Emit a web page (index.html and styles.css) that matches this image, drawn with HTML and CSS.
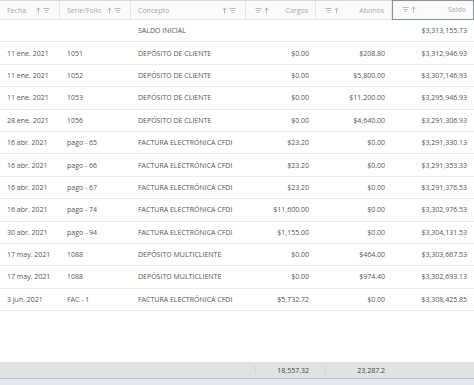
FILE: index.html
```html
<!DOCTYPE html>
<html lang="es">
<head>
<meta charset="utf-8">
<link rel="stylesheet" href="styles.css">
</head>
<body>
<div class="grid-wrap">
  <div class="row head">
    <div class="hc left"><span class="ht">Fecha</span><span class="icons"><svg class="ic" viewBox="0 0 7 7"><path d="M3.5 6.5V1M1.3 3.2L3.5 1l2.2 2.2" fill="none" stroke="#aaa" stroke-width="0.8"/></svg><svg class="ic" viewBox="0 0 7 7"><path d="M0.5 1.5h6M1.5 3.5h4M2.5 5.5h2" stroke="#aaa" stroke-width="0.8"/></svg></span></div>
    <div class="hc left"><span class="ht">Serie/Folio</span><span class="icons"><svg class="ic" viewBox="0 0 7 7"><path d="M3.5 6.5V1M1.3 3.2L3.5 1l2.2 2.2" fill="none" stroke="#aaa" stroke-width="0.8"/></svg><svg class="ic" viewBox="0 0 7 7"><path d="M0.5 1.5h6M1.5 3.5h4M2.5 5.5h2" stroke="#aaa" stroke-width="0.8"/></svg></span></div>
    <div class="hc left"><span class="ht">Concepto</span><span class="icons"><svg class="ic" viewBox="0 0 7 7"><path d="M3.5 6.5V1M1.3 3.2L3.5 1l2.2 2.2" fill="none" stroke="#aaa" stroke-width="0.8"/></svg><svg class="ic" viewBox="0 0 7 7"><path d="M0.5 1.5h6M1.5 3.5h4M2.5 5.5h2" stroke="#aaa" stroke-width="0.8"/></svg></span></div>
    <div class="hc right"><span class="icons"><svg class="ic" viewBox="0 0 7 7"><path d="M0.5 1.5h6M1.5 3.5h4M2.5 5.5h2" stroke="#aaa" stroke-width="0.8"/></svg><svg class="ic" viewBox="0 0 7 7"><path d="M3.5 6.5V1M1.3 3.2L3.5 1l2.2 2.2" fill="none" stroke="#aaa" stroke-width="0.8"/></svg></span><span class="ht">Cargos</span></div>
    <div class="hc right"><span class="icons"><svg class="ic" viewBox="0 0 7 7"><path d="M0.5 1.5h6M1.5 3.5h4M2.5 5.5h2" stroke="#aaa" stroke-width="0.8"/></svg><svg class="ic" viewBox="0 0 7 7"><path d="M3.5 6.5V1M1.3 3.2L3.5 1l2.2 2.2" fill="none" stroke="#aaa" stroke-width="0.8"/></svg></span><span class="ht">Abonos</span></div>
    <div class="hc right focus"><span class="icons"><svg class="ic" viewBox="0 0 7 7"><path d="M0.5 1.5h6M1.5 3.5h4M2.5 5.5h2" stroke="#aaa" stroke-width="0.8"/></svg><svg class="ic" viewBox="0 0 7 7"><path d="M3.5 6.5V1M1.3 3.2L3.5 1l2.2 2.2" fill="none" stroke="#aaa" stroke-width="0.8"/></svg></span><span class="ht">Saldo</span></div>
  </div>

  <div class="row"><div class="c"></div><div class="c"></div><div class="c">SALDO INICIAL</div><div class="c num"></div><div class="c num"></div><div class="c num">$3,313,155.73</div></div>
  <div class="row"><div class="c">11 ene. 2021</div><div class="c">1051</div><div class="c">DEPÓSITO DE CLIENTE</div><div class="c num">$0.00</div><div class="c num">$208.80</div><div class="c num">$3,312,946.93</div></div>
  <div class="row"><div class="c">11 ene. 2021</div><div class="c">1052</div><div class="c">DEPÓSITO DE CLIENTE</div><div class="c num">$0.00</div><div class="c num">$5,800.00</div><div class="c num">$3,307,146.93</div></div>
  <div class="row"><div class="c">11 ene. 2021</div><div class="c">1053</div><div class="c">DEPÓSITO DE CLIENTE</div><div class="c num">$0.00</div><div class="c num">$11,200.00</div><div class="c num">$3,295,946.93</div></div>
  <div class="row"><div class="c">28 ene. 2021</div><div class="c">1056</div><div class="c">DEPÓSITO DE CLIENTE</div><div class="c num">$0.00</div><div class="c num">$4,640.00</div><div class="c num">$3,291,306.93</div></div>
  <div class="row"><div class="c">16 abr. 2021</div><div class="c">pago - 65</div><div class="c">FACTURA ELECTRÓNICA CFDI</div><div class="c num">$23.20</div><div class="c num">$0.00</div><div class="c num">$3,291,330.13</div></div>
  <div class="row"><div class="c">16 abr. 2021</div><div class="c">pago - 66</div><div class="c">FACTURA ELECTRÓNICA CFDI</div><div class="c num">$23.20</div><div class="c num">$0.00</div><div class="c num">$3,291,353.33</div></div>
  <div class="row"><div class="c">16 abr. 2021</div><div class="c">pago - 67</div><div class="c">FACTURA ELECTRÓNICA CFDI</div><div class="c num">$23.20</div><div class="c num">$0.00</div><div class="c num">$3,291,376.53</div></div>
  <div class="row"><div class="c">16 abr. 2021</div><div class="c">pago - 74</div><div class="c">FACTURA ELECTRÓNICA CFDI</div><div class="c num">$11,600.00</div><div class="c num">$0.00</div><div class="c num">$3,302,976.53</div></div>
  <div class="row"><div class="c">30 abr. 2021</div><div class="c">pago - 94</div><div class="c">FACTURA ELECTRÓNICA CFDI</div><div class="c num">$1,155.00</div><div class="c num">$0.00</div><div class="c num">$3,304,131.53</div></div>
  <div class="row"><div class="c">17 may. 2021</div><div class="c">1088</div><div class="c">DEPÓSITO MULTICLIENTE</div><div class="c num">$0.00</div><div class="c num">$464.00</div><div class="c num">$3,303,667.53</div></div>
  <div class="row"><div class="c">17 may. 2021</div><div class="c">1088</div><div class="c">DEPÓSITO MULTICLIENTE</div><div class="c num">$0.00</div><div class="c num">$974.40</div><div class="c num">$3,302,693.13</div></div>
  <div class="row"><div class="c">3 jun. 2021</div><div class="c">FAC - 1</div><div class="c">FACTURA ELECTRÓNICA CFDI</div><div class="c num">$5,732.72</div><div class="c num">$0.00</div><div class="c num">$3,308,425.85</div></div>

  <div class="spacer"></div>

  <div class="row foot">
    <div class="f"></div><div class="f"></div><div class="f"></div>
    <div class="f num"><span class="tick"></span>18,557.32</div>
    <div class="f num"><span class="tick"></span>23,287.2</div>
    <div class="f"></div>
  </div>
  <div class="bottom"></div>
</div>
</body>
</html>
```

FILE: styles.css
```css
html, body {
  margin: 0;
  padding: 0;
  background: #ffffff;
}
body {
  font-family: "Open Sans", "Noto Sans", sans-serif;
  font-size: 7px;
  color: #555;
}
.grid-wrap {
  width: 474px;
  height: 385px;
  display: flex;
  flex-direction: column;
  overflow: hidden;
}
.row {
  display: grid;
  grid-template-columns: 60px 71px 115px 70px 76px 82px;
  height: 22.4px;
  border-bottom: 1px solid #ececec;
  box-sizing: border-box;
  align-items: center;
  flex: none;
}
.head {
  height: 20px;
  background: #fbfbfb;
  border-top: 1px solid #d6d6d6;
  border-bottom: 1px solid #e4e4e4;
  color: #a8a8a8;
}
.hc {
  height: 100%;
  display: flex;
  align-items: center;
  justify-content: space-between;
  border-right: 1px solid #e6e6e6;
  box-sizing: border-box;
  padding: 0 9px 0 7px;
}
.hc.right {
  padding: 0 7px 0 9px;
}
.hc.focus {
  border: 1px solid #8194ab;
  border-top-color: #8194ab;
  margin-top: -1px;
  height: calc(100% + 2px);
}
.icons {
  display: flex;
  gap: 1px;
  align-items: center;
}
.ic {
  width: 7px;
  height: 7px;
  display: block;
}
.c {
  padding: 0 7px;
  white-space: nowrap;
  overflow: hidden;
}
.num {
  text-align: right;
}
.spacer {
  flex: 1;
}
.foot {
  height: 16px;
  background: #e2e2e2;
  border-bottom: none;
  color: #444;
}
.f {
  padding: 0 7px;
  position: relative;
  height: 100%;
  display: flex;
  align-items: center;
  justify-content: flex-end;
}
.tick {
  position: absolute;
  left: 9px;
  top: 4px;
  width: 1px;
  height: 8px;
  background: #d3d3d3;
}
.bottom {
  height: 7px;
  flex: none;
  background: #e4e9f0;
  border-top: 1px solid #b9c0c9;
  box-sizing: border-box;
}
```
